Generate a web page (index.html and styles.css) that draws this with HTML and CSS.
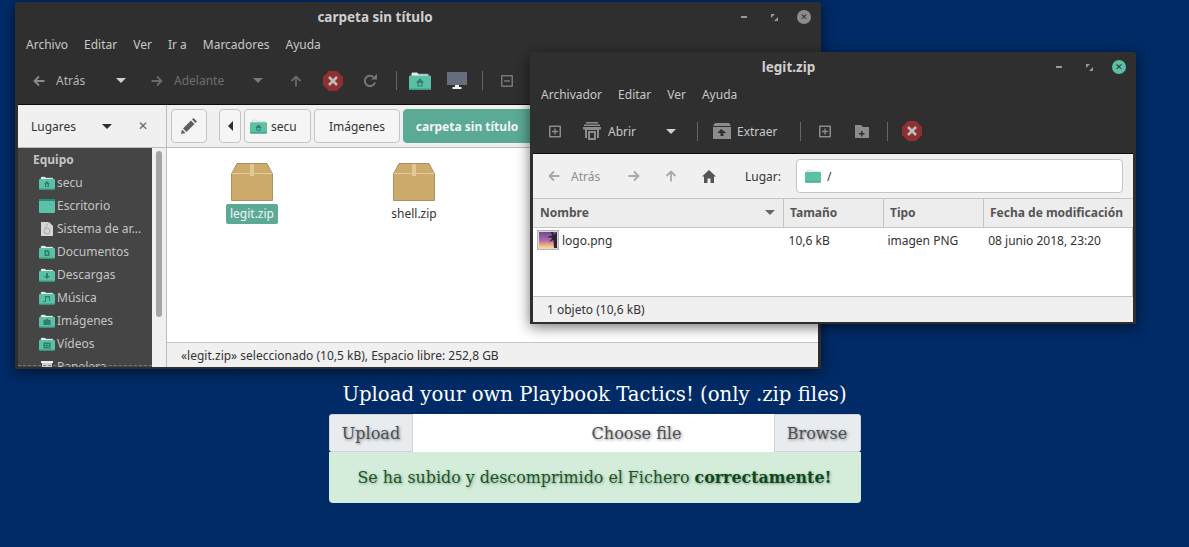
FILE: index.html
```html
<!DOCTYPE html>
<html>
  <head>
    <title>Upload Playbook Tactics</title>
    <link rel="stylesheet" href="styles.css">
  </head>
  <body>
    <svg class="defs" width="0" height="0">
      <symbol id="folder" viewBox="0 0 16 14">
        <path d="M2 3V1.500Q2 1 2.500 1H6L7 2H13.500Q14 2 14 2.500V4H2Z" fill="#eeeeee" stroke="#a9c9c0" stroke-width=".4"/>
        <path d="M1 3H15Q16 3 16 4V12.500Q16 13.500 15 13.500H1Q0 13.500 0 12.500V4Q0 3 1 3Z" fill="#5bc1a6"/>
        <path d="M0 12.500H16V12.800Q16 13.500 15 13.500H1Q0 13.500 0 12.800Z" fill="#3f9a84"/>
      </symbol>
      <symbol id="box" viewBox="0 0 42 38">
        <path d="M6 .5H36L41.500 11V37.500H.5V11Z" fill="#cdab6d" stroke="#ab9163"/>
        <path d="M1 10.500H41" stroke="#e2cb9f" fill="none"/>
        <path d="M19 1H23V13H19Z" fill="#e0c899"/>
      </symbol>
      <symbol id="stop" viewBox="0 0 20 20">
        <path d="M6 0H14L20 6V14L14 20H6L0 14V6Z" fill="#8f2f2f"/>
        <path d="M6 6L14 14M14 6L6 14" stroke="#bdbdbd" stroke-width="2.600" fill="none"/>
      </symbol>
      <symbol id="left" viewBox="0 0 12 12">
        <path d="M11.500 6H1.500M6 1.500L1.500 6L6 10.500" fill="none" stroke="currentColor" stroke-width="1.800"/>
      </symbol>
      <symbol id="right" viewBox="0 0 12 12">
        <path d="M.5 6H10.500M6 1.500L10.500 6L6 10.500" fill="none" stroke="currentColor" stroke-width="1.800"/>
      </symbol>
      <symbol id="up" viewBox="0 0 12 12">
        <path d="M6 11.500V1.500M1.500 6L6 1.500L10.500 6" fill="none" stroke="currentColor" stroke-width="1.800"/>
      </symbol>
      <symbol id="addbox" viewBox="0 0 12 13">
        <path d="M1 .5H11Q12 .5 12 1.500V11.500Q12 12.500 11 12.500H1Q0 12.500 0 11.500V1.500Q0 .5 1 .5ZM1.500 2V11H10.500V2Z" fill="currentColor" fill-rule="evenodd"/>
        <path d="M3 5.700H5.300V3.500H6.700V5.700H9V7.200H6.700V9.500H5.300V7.200H3Z" fill="currentColor"/>
      </symbol>
      <symbol id="restore" viewBox="0 0 7 7">
        <path d="M0 0H4L0 4ZM7 7H3L7 3Z" fill="currentColor"/>
      </symbol>
    </svg>

    <div class="desktop">
      <div class="window win-files">
        <div class="titlebar">
          <div class="title">carpeta sin título</div>
          <div class="controls">
            <span class="min"></span>
            <svg class="restore" width="7" height="7"><use href="#restore"/></svg>
            <span class="close close-idle">✕</span>
          </div>
        </div>
        <div class="menubar">
          <span>Archivo</span><span>Editar</span><span>Ver</span><span>Ir a</span><span>Marcadores</span><span>Ayuda</span>
        </div>
        <div class="toolbar">
          <svg class="ic t-back" width="12" height="12"><use href="#left"/></svg>
          <span class="t-label">Atrás</span>
          <span class="caret t-caret"></span>
          <svg class="ic dim t-fwd" width="12" height="12"><use href="#right"/></svg>
          <span class="t-label dim t-next">Adelante</span>
          <span class="caret dim t-caret2"></span>
          <svg class="ic dim t-up" width="12" height="12"><use href="#up"/></svg>
          <svg class="t-stop" width="20" height="20"><use href="#stop"/></svg>
          <svg class="ic t-reload" width="14" height="14" viewBox="0 0 14 14">
            <path d="M12 8.500A5.200 5.200 0 1 1 10.500 3" fill="none" stroke="currentColor" stroke-width="2"/>
            <path d="M8 5.500H14V0Z" fill="currentColor"/>
          </svg>
          <span class="sep t-sep1"></span>
          <svg class="t-home" width="22" height="20" viewBox="0 0 16 14">
            <use href="#folder"/>
            <path d="M8 5L11 8H10V11H6V8H5ZM7 8.500V10.300H9V8.500Z" fill="#35806d" fill-rule="evenodd"/>
          </svg>
          <svg class="t-monitor" width="20" height="18" viewBox="0 0 20 18">
            <path d="M0 0H20V13H0Z" fill="#666d7c"/>
            <path d="M8 13H12V15H14.500V17H5.500V15H8Z" fill="#eeeeee"/>
          </svg>
          <span class="sep t-sep2"></span>
          <svg class="ic t-view" width="12" height="12" viewBox="0 0 12 12">
            <path d="M1 0H11Q12 0 12 1V11Q12 12 11 12H1Q0 12 0 11V1Q0 0 1 0ZM1.500 1.500V10.500H10.500V1.500ZM3 5.200H9V6.800H3Z" fill="currentColor" fill-rule="evenodd"/>
          </svg>
        </div>
        <div class="panes">
          <div class="side">
            <div class="lugares">
              <span class="lugares-name">Lugares</span>
              <span class="caret dark"></span>
              <span class="lugares-x">✕</span>
            </div>
            <div class="places-wrap">
              <div class="places">
                <div class="group">Equipo</div>
                <div class="place">
                  <svg width="16" height="14" viewBox="0 0 16 14"><use href="#folder"/><path d="M8 5L11 8H10V11H6V8H5ZM7 8.500V10.300H9V8.500Z" fill="#2f7d6a" fill-rule="evenodd"/></svg>
                  <span>secu</span>
                </div>
                <div class="place">
                  <svg width="16" height="14" viewBox="0 0 16 14"><path d="M1 0H15Q16 0 16 1V13Q16 14 15 14H1Q0 14 0 13V1Q0 0 1 0Z" fill="#5bc1a6"/><path d="M0 1Q0 0 1 0H15Q16 0 16 1V2H0Z" fill="#2f8a75"/></svg>
                  <span>Escritorio</span>
                </div>
                <div class="place">
                  <svg width="16" height="14" viewBox="0 0 16 14"><path d="M2 0H10L14 4V14H2Z" fill="#d6d6d6"/><circle cx="8" cy="9" r="3" fill="none" stroke="#a9a9a9"/><path d="M10 0L6 6" stroke="#a9a9a9"/></svg>
                  <span>Sistema de ar...</span>
                </div>
                <div class="place">
                  <svg width="16" height="14" viewBox="0 0 16 14"><use href="#folder"/><path d="M5.500 5H9L10.500 6.500V11H5.500ZM7 6.500V9.500H9V7.500H8V6.500Z" fill="#2f7d6a" fill-rule="evenodd"/></svg>
                  <span>Documentos</span>
                </div>
                <div class="place">
                  <svg width="16" height="14" viewBox="0 0 16 14"><use href="#folder"/><path d="M7 5H9V8H11L8 11L5 8H7Z" fill="#2f7d6a"/></svg>
                  <span>Descargas</span>
                </div>
                <div class="place">
                  <svg width="16" height="14" viewBox="0 0 16 14"><use href="#folder"/><path d="M6 5H11V10H10V6.500H7V11H4.500V10H6Z" fill="#2f7d6a"/></svg>
                  <span>Música</span>
                </div>
                <div class="place">
                  <svg width="16" height="14" viewBox="0 0 16 14"><use href="#folder"/><path d="M4.500 6H6.500L7 5H9L9.500 6H11.500V11H4.500Z" fill="#2f7d6a"/></svg>
                  <span>Imágenes</span>
                </div>
                <div class="place">
                  <svg width="16" height="14" viewBox="0 0 16 14"><use href="#folder"/><path d="M4.500 5.500H11.500V11.500H4.500ZM6 7V8H7.500V7ZM8.500 7V8H10V7ZM6 9V10H7.500V9ZM8.500 9V10H10V9Z" fill="#2f7d6a" fill-rule="evenodd"/></svg>
                  <span>Vídeos</span>
                </div>
                <div class="place">
                  <svg width="16" height="14" viewBox="0 0 16 14"><path d="M3 2H13V14H3Z" fill="#cfcfcf"/><path d="M2 1H14V3H2Z" fill="#eeeeee"/></svg>
                  <span>Papelera</span>
                </div>
              </div>
              <div class="edge"></div>
            </div>
          </div>
          <div class="side-bar">
            <div class="side-bar-top"></div>
            <div class="scroll"><div class="thumb"></div></div>
          </div>
          <div class="main">
            <div class="pathbar">
              <button class="crumb pencil">
                <svg width="16" height="16" viewBox="0 0 16 16"><path d="M0 16L1 11.500L4.500 15ZM2 10.500L10 2.500L13.500 6L5.500 14ZM11 1.500L12.500 0L16 3.500L14.500 5Z" fill="#5f5f5f"/></svg>
              </button>
              <button class="crumb prev"><span class="prev-arrow"></span></button>
              <button class="crumb secu">
                <svg width="17" height="15" viewBox="0 0 16 14"><use href="#folder"/><path d="M8 5L11 8H10V11H6V8H5ZM7 8.500V10.300H9V8.500Z" fill="#2f7d6a" fill-rule="evenodd"/></svg>
                secu
              </button>
              <button class="crumb imgs">Imágenes</button>
              <button class="crumb current">carpeta sin título</button>
            </div>
            <div class="files">
              <div class="file file-legit">
                <svg width="42" height="38"><use href="#box"/></svg>
                <span class="file-name picked">legit.zip</span>
              </div>
              <div class="file file-shell">
                <svg width="42" height="38"><use href="#box"/></svg>
                <span class="file-name">shell.zip</span>
              </div>
            </div>
            <div class="status status-files">«legit.zip» seleccionado (10,5 kB), Espacio libre: 252,8 GB</div>
          </div>
        </div>
      </div>

      <div class="window win-archive">
        <div class="titlebar">
          <div class="title">legit.zip</div>
          <div class="controls">
            <span class="min"></span>
            <svg class="restore" width="7" height="7"><use href="#restore"/></svg>
            <span class="close">✕</span>
          </div>
        </div>
        <div class="menubar">
          <span>Archivador</span><span>Editar</span><span>Ver</span><span>Ayuda</span>
        </div>
        <div class="toolbar">
          <svg class="ic a-new" width="12" height="13"><use href="#addbox"/></svg>
          <svg class="ic a-open" width="18" height="18" viewBox="0 0 18 18">
            <path d="M3 0H15V1.500H3ZM1 2.500H17V4H1Z" fill="currentColor"/>
            <path d="M0 5H18V7.500H16V16H14V8H4V16H2V7.500H0Z" fill="currentColor"/>
            <path d="M5 9H13V18H5ZM7 11V16H11V11Z" fill="currentColor" fill-rule="evenodd"/>
          </svg>
          <span class="t-label bright a-abrir">Abrir</span>
          <span class="caret a-caret"></span>
          <span class="sep a-sep1"></span>
          <svg class="ic a-extract" width="18" height="16" viewBox="0 0 18 16">
            <path d="M2 0H16L18 3V16H0V3ZM8 6L4.500 10H7.500V13H10.500V10H13.500Z" fill="currentColor" fill-rule="evenodd"/>
            <path d="M0 3.500H18" stroke="#2f2f2f"/>
          </svg>
          <span class="t-label bright a-extraer">Extraer</span>
          <span class="sep a-sep2"></span>
          <svg class="ic a-add" width="12" height="13"><use href="#addbox"/></svg>
          <svg class="ic a-folder" width="14" height="13" viewBox="0 0 14 13">
            <path d="M0 0H6L8 2H14V13H0ZM6 6V8H4V9.500H6V11.500H7.500V9.500H9.500V8H7.500V6Z" fill="currentColor" fill-rule="evenodd"/>
          </svg>
          <span class="sep a-sep3"></span>
          <svg class="a-stop" width="20" height="20"><use href="#stop"/></svg>
        </div>
        <div class="location">
          <svg class="loc-ic l-back" width="12" height="12"><use href="#left"/></svg>
          <span class="l-atras">Atrás</span>
          <svg class="loc-ic l-fwd" width="12" height="12"><use href="#right"/></svg>
          <svg class="loc-ic l-up" width="12" height="12"><use href="#up"/></svg>
          <svg class="l-home" width="14" height="13" viewBox="0 0 14 13">
            <path d="M7 0L14 6.500H12V13H8.500V8.500H5.500V13H2V6.500H0Z" fill="#555555"/>
          </svg>
          <span class="l-lugar">Lugar:</span>
          <div class="l-input">
            <svg width="16" height="14" viewBox="0 0 16 14"><use href="#folder"/></svg>
            <span>/</span>
          </div>
        </div>
        <div class="cols">
          <div class="col col-name">Nombre<span class="caret grey"></span></div>
          <div class="col col-size">Tamaño</div>
          <div class="col col-type">Tipo</div>
          <div class="col col-date">Fecha de modificación</div>
        </div>
        <div class="rows">
          <div class="row">
            <div class="cell col-name">
              <svg class="thumbnail" width="22" height="20" viewBox="0 0 22 20">
                <defs>
                  <linearGradient id="sunset" x1="0" y1="0" x2="0" y2="1">
                    <stop offset="0" stop-color="#6a4a92"/>
                    <stop offset=".55" stop-color="#b56ea3"/>
                    <stop offset=".8" stop-color="#f0a793"/>
                    <stop offset="1" stop-color="#f6df7c"/>
                  </linearGradient>
                </defs>
                <rect x=".75" y=".75" width="20.500" height="18.500" fill="#ffffff" stroke="#b5b5b5" stroke-width="1.500"/>
                <rect x="2" y="2" width="18" height="16" fill="url(#sunset)"/>
                <path d="M17 18L16.500 10L12 12L15.500 8L10 7L15.500 5.500L13.500 2H16L17 5L20 2V18Z" fill="#2b2233"/>
              </svg>
              logo.png
            </div>
            <div class="cell col-size">10,6 kB</div>
            <div class="cell col-type">imagen PNG</div>
            <div class="cell col-date">08 junio 2018, 23:20</div>
          </div>
        </div>
        <div class="status status-archive">1 objeto (10,6 kB)</div>
      </div>
    </div>

    <div class="upload">
      <h4>Upload your own Playbook Tactics! (only .zip files)</h4>
      <div class="input-group">
        <span class="addon addon-left">Upload</span>
        <span class="file-input">Choose file</span>
        <span class="addon addon-right">Browse</span>
      </div>
      <div class="alert">Se ha subido y descomprimido el Fichero <strong>correctamente!</strong></div>
    </div>
  </body>
</html>
```

FILE: styles.css
```css
* {
  box-sizing: border-box;
}
html,
body {
  height: 100%;
}
body {
  margin: 0;
  background-color: #012b66;
  font-family: "DejaVu Serif", serif;
  overflow: hidden;
}
.defs {
  position: absolute;
}
svg {
  display: block;
  flex: none;
}

/* desktop */
.desktop {
  position: relative;
  height: 382px;
}
.window {
  position: absolute;
  display: flex;
  flex-direction: column;
  padding: 0 3px 2px;
  background-color: #2f2f2f;
  border-radius: 3px 3px 0 0;
  box-shadow: 0 3px 14px rgba(0, 0, 0, 0.55);
  font-family: "Noto Sans", sans-serif;
  font-size: 12px;
  color: #333;
}
.win-files {
  left: 15px;
  top: 2px;
  width: 806px;
  height: 367px;
}
.win-archive {
  left: 530px;
  top: 52px;
  width: 606px;
  height: 272px;
}
.titlebar {
  display: flex;
  align-items: center;
  height: 30px;
  flex: none;
}
.title {
  flex: 1;
  text-align: center;
  font-size: 13.5px;
  font-weight: 700;
  color: #cfcfcf;
}
.win-archive .title {
  padding-right: 3px;
}
.controls {
  display: flex;
  align-items: center;
  width: 86px;
  color: #9a9a9a;
}
.min {
  width: 6px;
  height: 2px;
  margin-left: 9px;
  background-color: #9a9a9a;
}
.restore {
  margin-left: 24px;
}
.close {
  display: flex;
  align-items: center;
  justify-content: center;
  width: 14px;
  height: 14px;
  margin-left: 19px;
  border-radius: 50%;
  background-color: #5bbfa5;
  color: #2f2f2f;
  font-family: "DejaVu Sans", sans-serif;
  font-size: 9px;
  font-weight: 700;
}
.close-idle {
  background-color: #8c8c8c;
}
.menubar {
  display: flex;
  align-items: center;
  gap: 16px;
  height: 25px;
  flex: none;
  padding-left: 8px;
  color: #c8c8c8;
}
.toolbar {
  display: flex;
  align-items: center;
  height: 47px;
  flex: none;
  border-bottom: 1px solid #0c0c0c;
  color: #bdbdbd;
}
.win-files .toolbar {
  height: 48px;
}
.win-archive .toolbar {
  padding-top: 2px;
}
.ic {
  color: #8c8c8c;
}
.t-label {
  color: #b5b5b5;
}
.dim {
  color: #6e6e6e;
}
.ic.dim {
  color: #6a6a6a;
}
.bright {
  color: #c8c8c8;
}
.caret {
  width: 0;
  height: 0;
  border-left: 5px solid transparent;
  border-right: 5px solid transparent;
  border-top: 5px solid #d0d0d0;
}
.caret.dim {
  border-top-color: #7a7a7a;
}
.caret.dark {
  border-top-color: #2f2f2f;
}
.caret.grey {
  border-top-color: #666;
  margin-left: auto;
  margin-right: 8px;
}
.sep {
  width: 1px;
  height: 19px;
  background-color: #666;
}

/* file manager toolbar */
.t-back { margin-left: 15px; }
.t-back + .t-label { margin-left: 11px; width: 28px; }
.t-caret { margin-left: 32px; }
.t-fwd { margin-left: 25px; }
.t-next { margin-left: 11px; width: 48px; }
.t-caret2 { margin-left: 31px; }
.t-up { margin-left: 27px; }
.t-stop { margin-left: 21px; }
.t-reload { margin-left: 20px; color: #777; }
.t-sep1 { margin-left: 19px; }
.t-home { margin-left: 12px; }
.t-monitor { margin-left: 16px; }
.t-sep2 { margin-left: 15px; }
.t-view { margin-left: 18px; color: #777; }

/* file manager panes */
.panes {
  display: flex;
  flex: 1;
  min-height: 0;
  background-color: #f0f0f0;
}
.side {
  display: flex;
  flex-direction: column;
  width: 134px;
  flex: none;
}
.lugares {
  display: flex;
  align-items: center;
  height: 43px;
  flex: none;
  padding-left: 13px;
  border-bottom: 1px solid #bdbdbd;
  color: #333;
}
.lugares-name {
  width: 71px;
}
.lugares-x {
  margin-left: 26px;
  margin-right: -30px;
  font-family: "DejaVu Sans", sans-serif;
  font-size: 12px;
  font-weight: 700;
  color: #666;
}
.places-wrap {
  position: relative;
  flex: 1;
  min-height: 0;
  overflow: hidden;
  background-color: #454545;
}
.places {
  padding-top: 1px;
  color: #c4c4c4;
}
.group {
  height: 22px;
  line-height: 22px;
  padding-left: 15px;
  font-weight: 700;
  color: #c4c4c4;
}
.place {
  display: flex;
  align-items: center;
  gap: 2px;
  height: 23px;
  padding-left: 21px;
}
.edge {
  position: absolute;
  left: 0;
  right: 0;
  bottom: 1px;
  border-top: 1px dashed #777;
}
.side-bar {
  display: flex;
  flex-direction: column;
  width: 15px;
  flex: none;
  border-right: 1px solid #bdbdbd;
}
.side-bar-top {
  height: 43px;
  flex: none;
  border-bottom: 1px solid #bdbdbd;
  margin-right: -1px;
}
.scroll {
  flex: 1;
  padding: 3px 4px 0;
}
.thumb {
  width: 6px;
  height: 166px;
  border-radius: 3px;
  background-color: #a5a5a5;
}
.main {
  display: flex;
  flex-direction: column;
  flex: 1;
  min-width: 0;
}
.pathbar {
  display: flex;
  align-items: center;
  height: 43px;
  flex: none;
  padding-left: 4px;
  border-bottom: 1px solid #bdbdbd;
  overflow: hidden;
}
.crumb {
  display: flex;
  align-items: center;
  justify-content: center;
  gap: 4px;
  height: 34px;
  flex: none;
  padding: 0;
  background-color: #f5f5f5;
  border: 1px solid #c4c4c4;
  border-radius: 4px;
  color: #333;
  font-family: inherit;
  font-size: 12px;
}
.pencil {
  width: 36px;
  margin-right: 12px;
}
.prev {
  width: 22px;
  margin-right: 3px;
}
.prev-arrow {
  width: 0;
  height: 0;
  border-top: 5px solid transparent;
  border-bottom: 5px solid transparent;
  border-right: 5px solid #2f2f2f;
}
.secu {
  justify-content: flex-start;
  width: 67px;
  margin-right: 3px;
  padding-left: 5px;
}
.imgs {
  width: 86px;
  margin-right: 3px;
}
.current {
  width: 150px;
  padding-right: 22px;
  background-color: #5aaa96;
  border-color: #5aaa96;
  color: #f4f4f4;
  font-weight: 700;
}
.files {
  display: flex;
  flex: 1;
  min-height: 0;
  background-color: #fff;
}
.file {
  display: flex;
  flex-direction: column;
  align-items: center;
  width: 60px;
  padding-top: 15px;
}
.file-legit {
  margin-left: 55px;
}
.file-shell {
  margin-left: 102px;
}
.file-name {
  margin-top: 3px;
  padding: 0 4px;
  height: 20px;
  line-height: 20px;
  border-radius: 2px;
}
.picked {
  background-color: #5aaa96;
  color: #f4f4f4;
}
.status {
  display: flex;
  align-items: center;
  flex: none;
  background-color: #f0f0f0;
  border-top: 1px solid #c4c4c4;
}
.status-files {
  height: 25px;
  padding-left: 14px;
}

/* archive manager */
.a-new { margin-left: 16px; }
.a-open { margin-left: 22px; }
.a-abrir { margin-left: 7px; width: 28px; }
.a-caret { margin-left: 30px; }
.a-sep1 { margin-left: 21px; }
.a-extract { margin-left: 15px; }
.a-extraer { margin-left: 6px; width: 40px; }
.a-sep2 { margin-left: 23px; }
.a-add { margin-left: 18px; }
.a-folder { margin-left: 24px; }
.a-sep3 { margin-left: 18px; }
.a-stop { margin-left: 14px; }

.location {
  display: flex;
  align-items: center;
  height: 44px;
  flex: none;
  background-color: #f0f0f0;
  color: #333;
}
.loc-ic {
  color: #a8a8a8;
}
.l-back { margin-left: 15px; }
.l-atras { margin-left: 11px; width: 30px; color: #8e8e8e; }
.l-fwd { margin-left: 27px; }
.l-up { margin-left: 25px; }
.l-home { margin-left: 25px; }
.l-lugar { margin-left: 29px; width: 36px; }
.l-input {
  display: flex;
  align-items: center;
  gap: 6px;
  width: 327px;
  height: 34px;
  margin-left: 15px;
  padding-left: 8px;
  background-color: #fff;
  border: 1px solid #c4c4c4;
  border-radius: 4px;
}
.cols {
  display: flex;
  height: 30px;
  flex: none;
  padding-bottom: 2px;
  background-color: #ededed;
  border-top: 1px solid #c4c4c4;
  border-bottom: 1px solid #c4c4c4;
  font-weight: 700;
  color: #555;
}
.col {
  display: flex;
  align-items: center;
  margin-bottom: -2px;
  padding-bottom: 2px;
  padding-left: 6px;
  border-right: 1px solid #c4c4c4;
}
.col-name.col {
  padding-left: 7px;
}
.col-name { width: 251px; }
.col-size { width: 100px; }
.col-type { width: 100px; }
.col-date { width: 149px; }
.col-date.col {
  border-right: 0;
}
.rows {
  flex: 1;
  min-height: 0;
  background-color: #fff;
  border-right: 1px solid #c4c4c4;
}
.row {
  display: flex;
  height: 24px;
  align-items: center;
}
.cell {
  display: flex;
  align-items: center;
  padding-left: 4px;
  gap: 3px;
}
.cell.col-size,
.cell.col-date {
  padding-left: 5px;
}
.status-archive {
  height: 26px;
  padding-left: 14px;
}

/* upload form */
.upload {
  width: 532px;
  margin: 0 auto;
}
h4 {
  margin: 0 0 7px;
  height: 25px;
  line-height: 26px;
  white-space: nowrap;
  text-align: center;
  font-size: 19.7px;
  font-weight: 400;
  color: #fff;
}
.input-group {
  display: flex;
  height: 38px;
  border-radius: 4px;
  overflow: hidden;
  font-size: 16px;
  color: #495057;
  text-shadow: 1px 1px 3px rgba(0, 0, 0, 0.45);
}
.addon {
  display: flex;
  align-items: center;
  justify-content: center;
  flex: none;
  background-color: #e9ecef;
  border: 1px solid #ced4da;
}
.addon-left {
  width: 84px;
  padding-left: 1px;
}
.addon-right {
  width: 87px;
}
.file-input {
  display: flex;
  align-items: center;
  justify-content: center;
  flex: 1;
  padding-left: 87px;
  background-color: #fff;
}
.alert {
  height: 51px;
  line-height: 51px;
  text-align: center;
  background-color: #d4edda;
  border-radius: 0 0 4px 4px;
  font-size: 15.85px;
  color: #155724;
  text-shadow: 1px 1px 3px rgba(0, 0, 0, 0.35);
}
.alert strong {
  color: #0b4a1c;
}
```
